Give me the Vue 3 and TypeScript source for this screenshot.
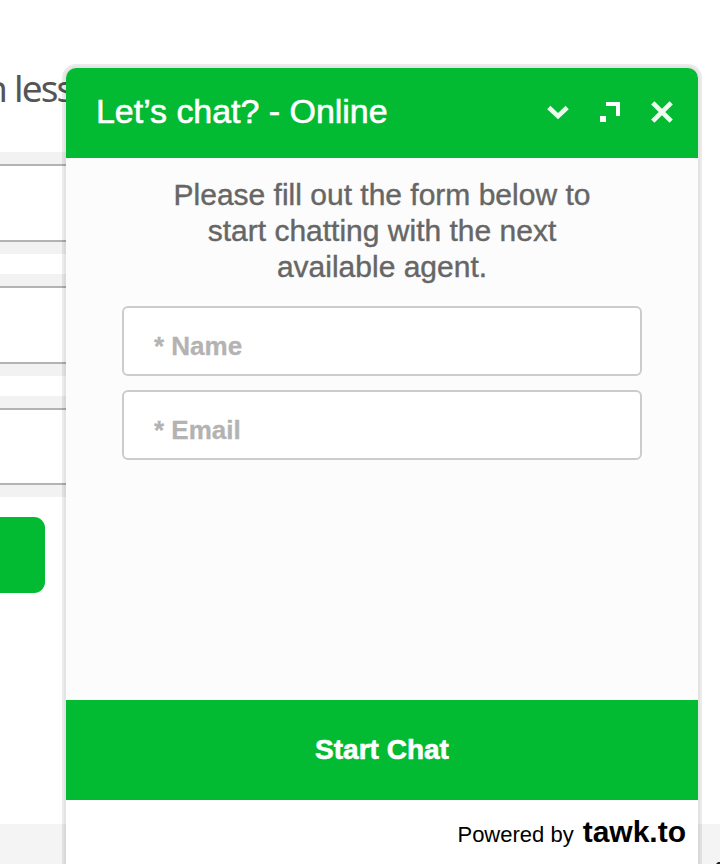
<script setup lang="ts">
import { ref } from 'vue'

interface Field {
  key: string
  label: string
  type: string
}

const fields: Field[] = [
  { key: 'name', label: '* Name', type: 'text' },
  { key: 'email', label: '* Email', type: 'email' },
]
const values = ref<Record<string, string>>({ name: '', email: '' })
const pageFields: number[] = [1, 2, 3]
</script>

<template>
  <div class="screen">
    <main class="page">
      <p class="lead">n less</p>
      <div class="page-form">
        <div v-for="n in pageFields" :key="n" class="page-field">
          <div class="page-input"></div>
        </div>
      </div>
      <div class="page-button"></div>
      <div class="page-footer">
        <svg class="corner" width="4" height="4" viewBox="0 0 4 4"><path d="M0 4 2 2H4V4Z" fill="#222" /></svg>
      </div>
    </main>

    <section class="widget">
      <header class="bar">
        <h1 class="title">Let’s chat? - Online</h1>
        <div class="controls">
          <svg width="24" height="24" viewBox="0 0 24 24">
            <path d="M2.8 7.5 12 16.2 21.2 7.5" fill="none" stroke="#f0fbf0" stroke-width="4.6" />
          </svg>
          <svg width="24" height="24" viewBox="0 0 24 24">
            <path d="M2 16h6v6H2zM8 2h14v14h-4V6H8z" fill="#fff" />
          </svg>
          <svg width="24" height="24" viewBox="0 0 24 24">
            <path d="M2.8 2.8 21.2 21.2M21.2 2.8 2.8 21.2" fill="none" stroke="#f0fbf0" stroke-width="4.6" />
          </svg>
        </div>
      </header>
      <form class="body" @submit.prevent>
        <p class="intro">Please fill out the form below to start chatting with the next available agent.</p>
        <input
          v-for="f in fields"
          :key="f.key"
          v-model="values[f.key]"
          class="field"
          :type="f.type"
          :placeholder="f.label"
        />
      </form>
      <button class="start" type="button">Start Chat</button>
      <footer class="powered"><span>Powered by</span><strong>tawk.to</strong></footer>
    </section>
  </div>
</template>

<style>
body {
  margin: 0;
  overflow: hidden;
}
</style>

<style scoped>
.screen {
  position: relative;
  width: 720px;
  height: 864px;
  overflow: hidden;
  background: #fff;
  font-family: "Liberation Sans", Arial, sans-serif;
}
.page {
  display: flex;
  flex-direction: column;
  height: 864px;
}
.lead {
  box-sizing: border-box;
  height: 152px;
  margin: 0 0 0 -15px;
  padding: 62px 0 0;
  font: 37px/52px "Noto Sans", sans-serif;
  letter-spacing: -1.8px;
  color: #555;
  white-space: nowrap;
}
.page-form {
  display: flex;
  flex-direction: column;
  gap: 20px;
}
.page-field {
  box-sizing: border-box;
  height: 102px;
  padding: 12px 0;
  width: 400px;
  background: #f2f2f2;
}
.page-field:last-child {
  height: 101px;
}
.page-input {
  box-sizing: border-box;
  height: 100%;
  border: solid #b3b3b3;
  border-width: 2px 0;
  background: #fff;
}
.page-button {
  width: 45px;
  height: 76px;
  margin-top: 20px;
  border-radius: 0 11px 11px 0;
  background: #02bb32;
}
.page-footer {
  display: flex;
  align-items: flex-end;
  justify-content: flex-end;
  height: 40px;
  margin-top: auto;
  background: #f4f4f4;
}
.corner {
  display: block;
}
.widget {
  position: absolute;
  left: 66px;
  top: 68px;
  display: flex;
  flex-direction: column;
  width: 632px;
  height: 810px;
  border-radius: 10px 10px 0 0;
  background: #fff;
  box-shadow: 0 0 0 2px rgba(0, 0, 0, 0.03), 0 0 0 4px rgba(0, 0, 0, 0.08);
}
.bar {
  display: flex;
  align-items: center;
  justify-content: space-between;
  box-sizing: border-box;
  height: 90px;
  padding: 0 24px 2px 30px;
  border-radius: 10px 10px 0 0;
  background: #02bb32;
}
.title {
  margin: 0;
  padding-bottom: 2px;
  font-size: 34px;
  font-weight: 400;
  line-height: 40px;
  letter-spacing: -0.04px;
  color: #fff;
  -webkit-text-stroke: 0.6px #fff;
}
.controls {
  display: flex;
  gap: 28px;
}
.controls svg {
  display: block;
}
.body {
  display: flex;
  flex-direction: column;
  gap: 14px;
  box-sizing: border-box;
  height: 542px;
  padding: 19px 56px 0;
  background: #fcfcfc;
}
.intro {
  width: 430px;
  margin: 0 auto 7px;
  font-size: 30px;
  line-height: 36px;
  text-align: center;
  color: #666;
  -webkit-text-stroke: 0.4px #666;
}
.field {
  box-sizing: border-box;
  width: 520px;
  height: 70px;
  margin: 0;
  padding: 10px 30px 0;
  border: 2px solid #ccc;
  border-radius: 6px;
  outline: none;
  background: #fff;
  font: bold 26px/30px "Liberation Sans", Arial, sans-serif;
  color: #555;
}
.field::placeholder {
  color: #b3b3b3;
  opacity: 1;
  -webkit-text-stroke: 0.3px #b3b3b3;
}
.start {
  height: 100px;
  padding: 0;
  border: 0;
  background: #02bb32;
  font: bold 28px/32px "Liberation Sans", Arial, sans-serif;
  color: #fff;
  -webkit-text-stroke: 0.6px #fff;
}
.powered {
  display: flex;
  align-items: baseline;
  justify-content: flex-end;
  gap: 9px;
  padding: 15px 12px 0 0;
  line-height: 34px;
  color: #000;
}
.powered span {
  font-size: 22px;
}
.powered strong {
  font-size: 30px;
}
</style>
